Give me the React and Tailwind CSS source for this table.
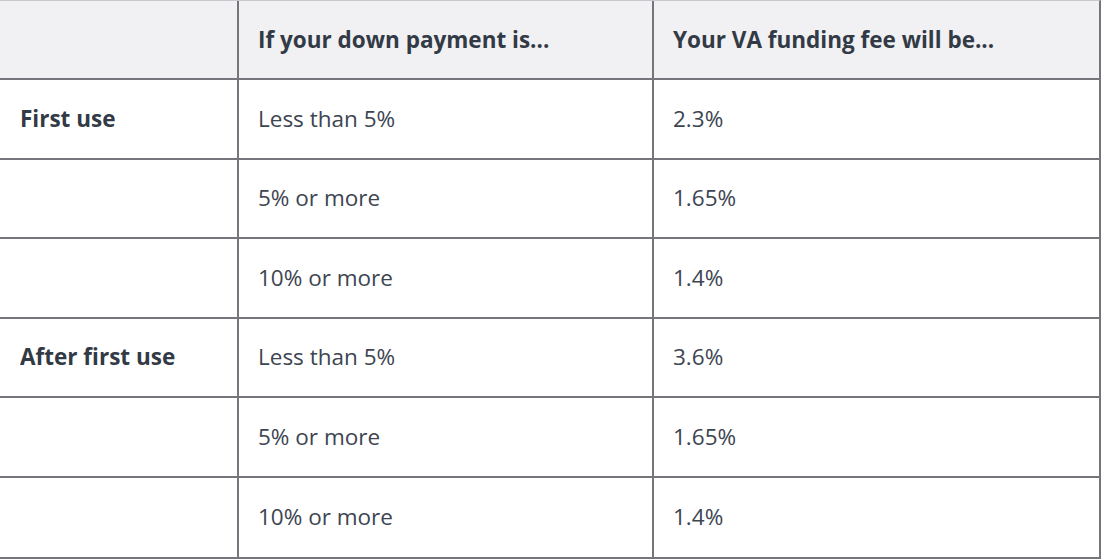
import React from 'react';

const rows = [
    { label: 'First use', down: 'Less than 5%', fee: '2.3%' },
    { label: '', down: '5% or more', fee: '1.65%' },
    { label: '', down: '10% or more', fee: '1.4%' },
    { label: 'After first use', down: 'Less than 5%', fee: '3.6%' },
    { label: '', down: '5% or more', fee: '1.65%' },
    { label: '', down: '10% or more', fee: '1.4%' },
];

function App() {
    return (
        <div className="w-[1102px] h-[560px] bg-white" style={{ fontFamily: '"Open Sans", "Noto Sans", sans-serif' }}>
            <div className="w-[1101px] border-t border-t-[#c9c8cc] border-r-2 border-r-[#77757c] border-b-2 border-b-[#77757c]">
                <div className="grid grid-cols-[239px_415px_1fr] h-[79px] bg-[#f1f0f3] border-b-2 border-[#77757c]">
                    <div className="border-r-2 border-[#77757c]"></div>
                    <div className="flex items-center pl-[19px] border-r-2 border-[#77757c] text-[22.5px] font-bold text-[#323a45]">
                        If your down payment is...
                    </div>
                    <div className="flex items-center pl-[19px] text-[22.5px] font-bold text-[#323a45]">
                        Your VA funding fee will be...
                    </div>
                </div>
                {rows.map((row, i) => (
                    <div
                        key={i}
                        className={`grid grid-cols-[239px_415px_1fr] h-[79.5px] ${i < rows.length - 1 ? 'border-b-2 border-[#77757c]' : ''}`}
                    >
                        <div className="flex items-center pl-[20px] border-r-2 border-[#77757c] text-[22.5px] font-bold text-[#323a45]">
                            {row.label}
                        </div>
                        <div className="flex items-center pl-[19px] border-r-2 border-[#77757c] text-[22.5px] text-[#3d4551]">
                            {row.down}
                        </div>
                        <div className="flex items-center pl-[19px] text-[22.5px] text-[#3d4551]">
                            {row.fee}
                        </div>
                    </div>
                ))}
            </div>
        </div>
    );
}

export default App;
